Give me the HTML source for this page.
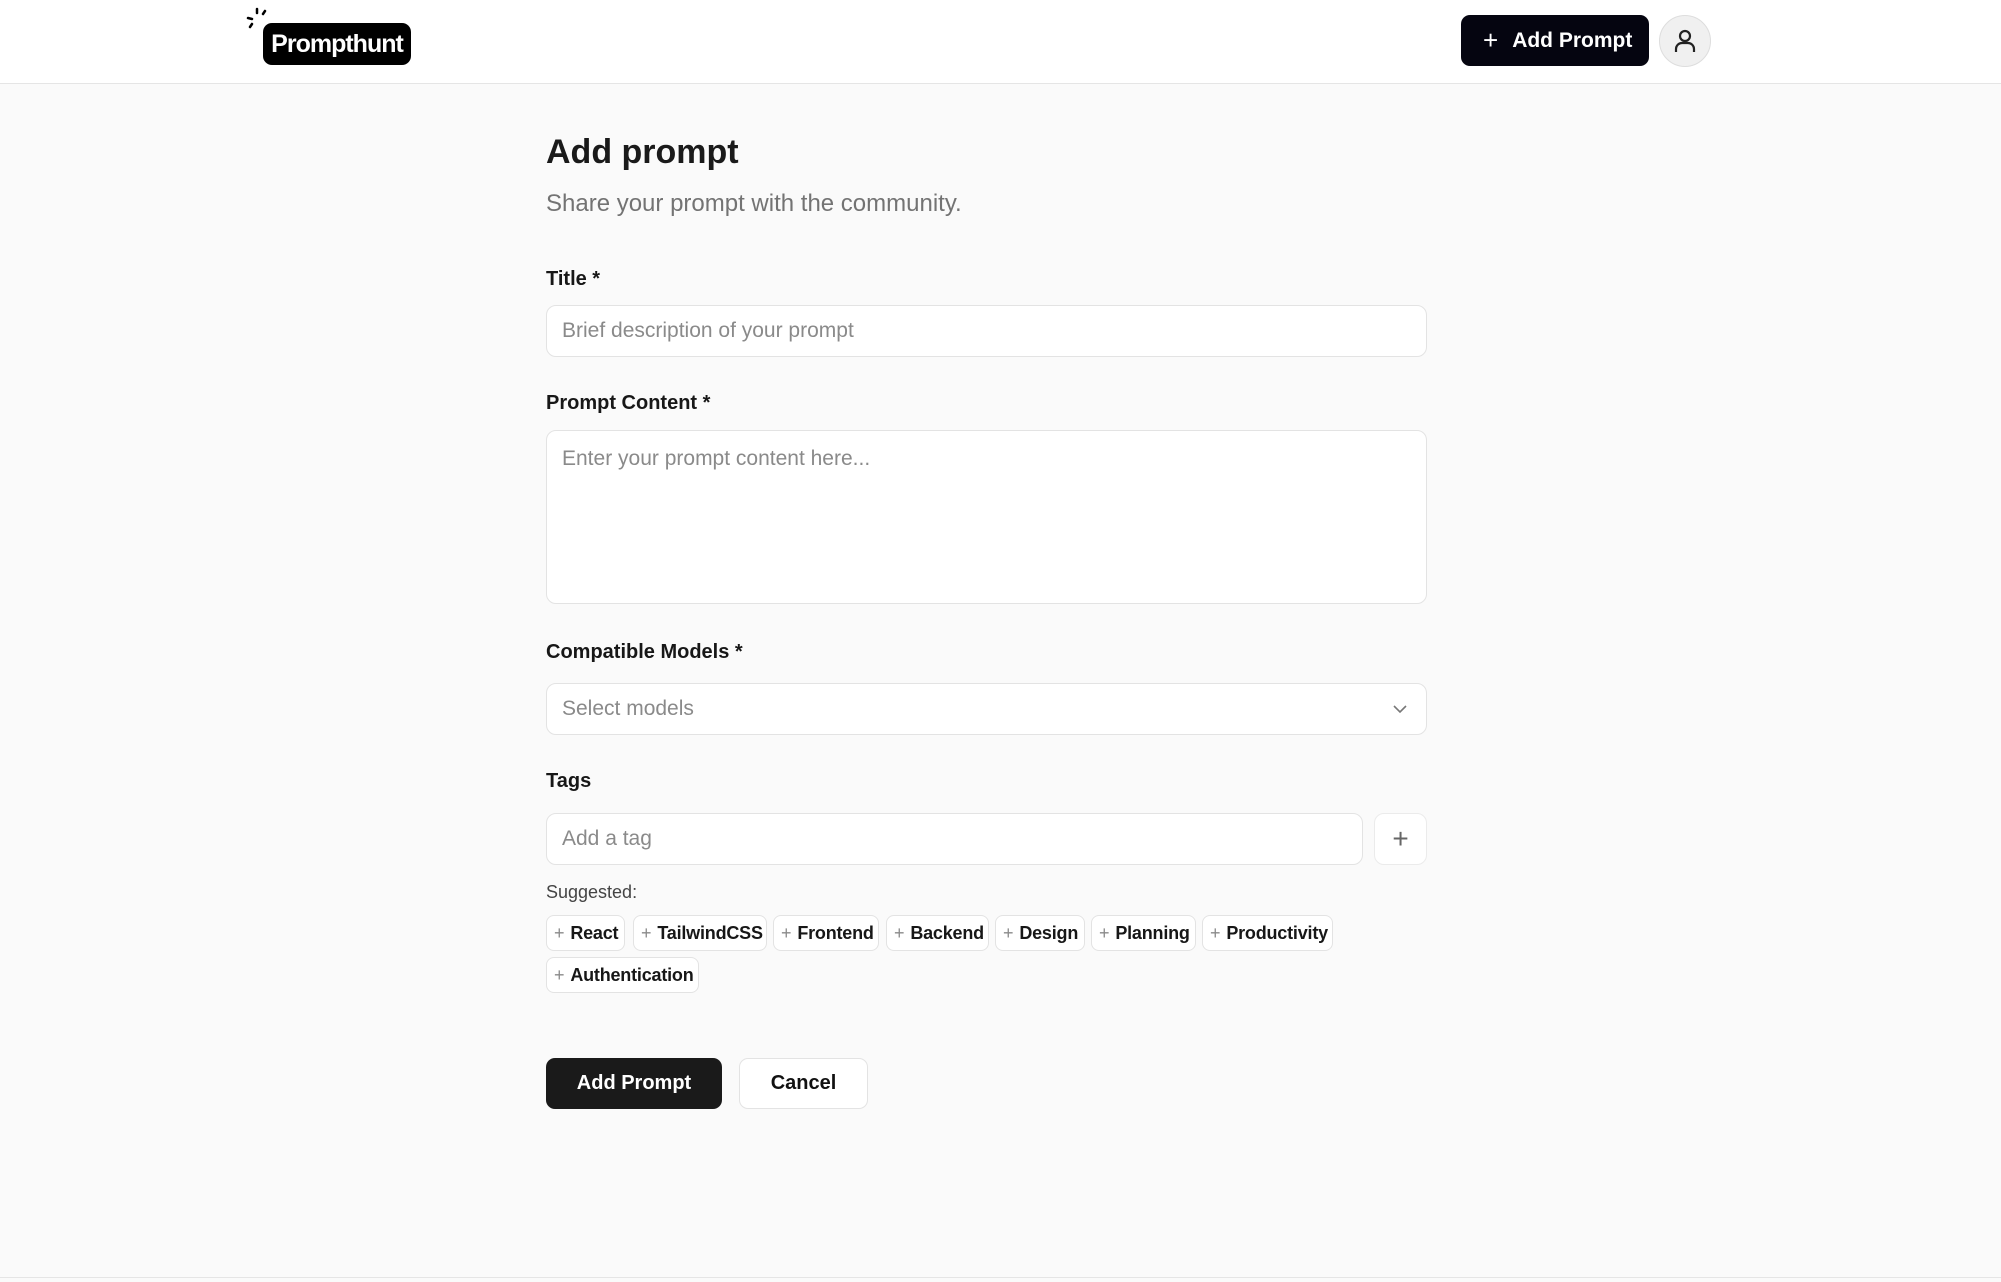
<!DOCTYPE html>
<html><head><meta charset="utf-8"><style>
*{box-sizing:border-box;margin:0;padding:0}
body{width:2001px;height:1282px;background:#fafafa;font-family:"Liberation Sans",Arial,sans-serif;color:#111;position:relative;overflow:hidden}
.a{position:absolute}
.hdr{left:0;top:0;width:2001px;height:84px;background:#fff;border-bottom:1px solid #e5e5e5}
.lbl{font-size:20px;font-weight:bold;color:#171717;left:546px}
.inp{left:546px;width:881px;background:#fff;border:1px solid #e3e3e3;border-radius:10px;font-size:21px;color:#8a8a8a;padding-left:15px}
.chip{height:36px;top:915px;background:#fff;border:1px solid #e3e3e3;border-radius:8px;font-size:18px;font-weight:bold;color:#171717;line-height:34px;padding-left:7px;white-space:nowrap;letter-spacing:-0.2px}
.chip span{color:#8a8a8a;font-weight:normal;margin-right:6px}
</style></head><body>
<div class="a hdr"></div>
<svg class="a" style="left:246px;top:7px" width="24" height="24" viewBox="0 0 24 24" stroke="#000" stroke-width="2.5" stroke-linecap="round"><line x1="11" y1="2" x2="11" y2="6"/><line x1="19" y1="4" x2="17" y2="7"/><line x1="2" y1="11" x2="6" y2="12"/><line x1="4" y1="20" x2="6" y2="17"/></svg>
<div class="a" style="left:263px;top:23px;width:148px;height:42px;background:#000;border-radius:9px;color:#fff;font-size:25px;font-weight:bold;line-height:42px;text-align:center;letter-spacing:-1px">Prompthunt</div>
<div class="a" style="left:1461px;top:15px;width:188px;height:51px;background:#050510;border-radius:9px;color:#fff;font-size:21px;font-weight:bold;line-height:51px;padding-left:22px"><span style="font-weight:normal;font-size:26px;margin-right:14px;vertical-align:-2px">+</span>Add Prompt</div>
<div class="a" style="left:1659px;top:15px;width:52px;height:52px;border-radius:50%;background:#f0f0f0;border:1px solid #ddd"></div>
<svg class="a" style="left:1671px;top:27px" width="28" height="28" viewBox="0 0 28 28" fill="none" stroke="#222" stroke-width="2.2"><circle cx="14" cy="9" r="5"/><path d="M5 25v-3a6 6 0 0 1 6-6h6a6 6 0 0 1 6 6v3"/></svg>

<div class="a" style="left:546px;top:133px;font-size:34px;font-weight:bold;color:#1a1a1a">Add prompt</div>
<div class="a" style="left:546px;top:190px;font-size:24px;color:#737373">Share your prompt with the community.</div>

<div class="a lbl" style="top:268px">Title *</div>
<div class="a inp" style="top:305px;height:52px;line-height:50px">Brief description of your prompt</div>
<div class="a lbl" style="top:392px">Prompt Content *</div>
<div class="a inp" style="top:430px;height:174px;padding-top:16px">Enter your prompt content here...</div>
<div class="a lbl" style="top:641px">Compatible Models *</div>
<div class="a inp" style="top:683px;height:52px;line-height:50px">Select models</div>
<svg class="a" style="left:1392px;top:702px" width="16" height="14" viewBox="0 0 16 14" fill="none" stroke="#777" stroke-width="1.6"><path d="M2 4l6 6 6-6"/></svg>
<div class="a lbl" style="top:770px">Tags</div>
<div class="a inp" style="top:813px;width:817px;height:52px;line-height:50px">Add a tag</div>
<div class="a" style="left:1374px;top:813px;width:53px;height:52px;background:#fff;border:1px solid #ebebeb;border-radius:10px;text-align:center;line-height:50px;font-size:28px;color:#666">+</div>
<div class="a" style="left:546px;top:882px;font-size:18px;color:#444">Suggested:</div>

<div class="a chip" style="left:546px;width:79px"><span>+</span>React</div>
<div class="a chip" style="left:633px;width:134px"><span>+</span>TailwindCSS</div>
<div class="a chip" style="left:773px;width:106px"><span>+</span>Frontend</div>
<div class="a chip" style="left:886px;width:103px"><span>+</span>Backend</div>
<div class="a chip" style="left:995px;width:90px"><span>+</span>Design</div>
<div class="a chip" style="left:1091px;width:105px"><span>+</span>Planning</div>
<div class="a chip" style="left:1202px;width:131px"><span>+</span>Productivity</div>
<div class="a chip" style="left:546px;top:957px;width:153px"><span>+</span>Authentication</div>

<div class="a" style="left:546px;top:1058px;width:176px;height:51px;background:#1a1a1a;border-radius:9px;color:#fff;font-size:20px;font-weight:bold;line-height:51px;text-align:center">Add Prompt</div>
<div class="a" style="left:739px;top:1058px;width:129px;height:51px;background:#fff;border:1px solid #e3e3e3;border-radius:9px;color:#111;font-size:20px;font-weight:bold;line-height:49px;text-align:center">Cancel</div>
<div class="a" style="left:0;top:1277px;width:2001px;height:1px;background:#e5e5e5"></div>
</body></html>
